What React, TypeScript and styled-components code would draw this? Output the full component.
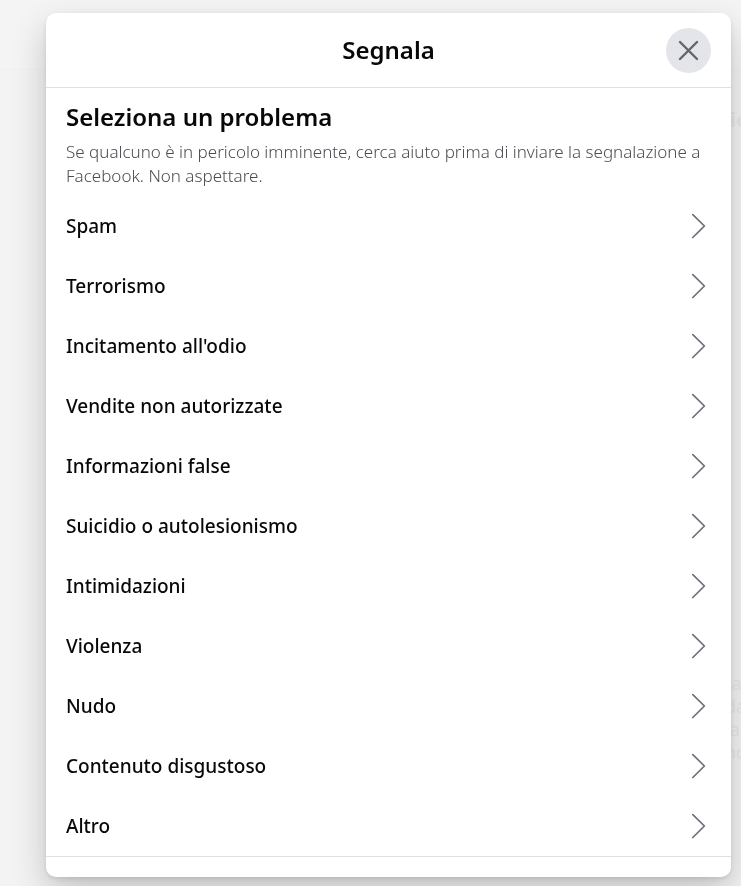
import React from "react";
import styled, { createGlobalStyle } from "styled-components";

const GlobalStyle = createGlobalStyle`
  *, *::before, *::after { box-sizing: border-box; }
  body {
    margin: 0;
    background: #f3f3f3;
    font-family: "Noto Sans", "Open Sans", sans-serif;
    color: #080809;
  }
`;

const Page = styled.div`
  min-height: 100vh;
  display: flex;
  flex-direction: column;
  overflow: hidden;
`;

const TopBar = styled.div`
  height: 70px;
  background: #f4f4f4;
  border-bottom: 1px solid #f1f1f1;
`;

const Feed = styled.div`
  flex: 1;
  display: flex;
  flex-direction: column;
  align-items: flex-end;
  color: #e8e8e8;
`;

const FeedTitle = styled.div`
  width: 11px;
  margin-top: 36px;
  font-size: 20px;
  font-weight: 700;
  line-height: 28px;
`;

const FeedText = styled.div`
  width: 16px;
  margin-top: 538px;
  font-size: 18px;
  line-height: 23px;
`;

const Overlay = styled.div`
  position: fixed;
  inset: 0;
  padding: 13px 10px 9px 46px;
`;

const Dialog = styled.section`
  height: 100%;
  display: flex;
  flex-direction: column;
  background: #fff;
  border-radius: 10px;
  box-shadow: 0 15px 35px rgba(0, 0, 0, 0.2), 0 2px 5px rgba(0, 0, 0, 0.1);
  overflow: hidden;
`;

const Header = styled.header`
  flex: none;
  height: 75px;
  padding: 0 20px;
  display: grid;
  grid-template-columns: 45px 1fr 45px;
  align-items: center;
  border-bottom: 1px solid #e0e0e1;
`;

const Title = styled.h1`
  grid-column: 2;
  margin: 0;
  text-align: center;
  font-size: 24px;
  line-height: 30px;
  font-weight: 600;
`;

const CloseButton = styled.button`
  width: 45px;
  height: 45px;
  padding: 0;
  border: 0;
  border-radius: 50%;
  background: #e4e5ea;
  color: #606670;
  display: flex;
  align-items: center;
  justify-content: center;
  cursor: pointer;
`;

const Body = styled.div`
  flex: 1;
  min-height: 0;
  padding: 14px 20px 0;
  overflow: hidden;
`;

const Heading = styled.h2`
  margin: 0;
  font-size: 24px;
  line-height: 30px;
  font-weight: 600;
`;

const Hint = styled.p`
  margin: 8px 0;
  font-size: 17px;
  font-weight: 300;
  line-height: 24px;
  color: #4a4d51;
`;

const List = styled.ul`
  margin: 0;
  padding: 0;
  list-style: none;
`;

const RowButton = styled.button`
  width: 100%;
  height: 60px;
  padding: 0;
  border: 0;
  background: none;
  display: flex;
  align-items: center;
  justify-content: space-between;
  font: inherit;
  font-size: 19px;
  font-weight: 500;
  line-height: 25px;
  color: inherit;
  text-align: left;
  cursor: pointer;
`;

const Footer = styled.footer`
  flex: none;
  height: 21px;
  border-top: 1px solid #e0e0e1;
`;

const PROBLEMS = [
  "Spam",
  "Terrorismo",
  "Incitamento all'odio",
  "Vendite non autorizzate",
  "Informazioni false",
  "Suicidio o autolesionismo",
  "Intimidazioni",
  "Violenza",
  "Nudo",
  "Contenuto disgustoso",
  "Altro",
];

const CloseIcon = () => (
  <svg width="21" height="21" viewBox="0 0 21 21" fill="none" stroke="currentColor" strokeWidth="2.4" strokeLinecap="round" aria-hidden="true">
    <path d="M2 2 19 19M19 2 2 19" />
  </svg>
);

const Chevron = () => (
  <svg width="25" height="30" viewBox="0 0 25 30" fill="none" stroke="#6a6f78" strokeWidth="1.7" strokeLinecap="round" strokeLinejoin="round" aria-hidden="true">
    <path d="M6.8 3.6 18.4 15 6.8 26.5" />
  </svg>
);

export default function App() {
  return (
    <>
      <GlobalStyle />
      <Page aria-hidden="true">
        <TopBar />
        <Feed>
          <FeedTitle>io</FeedTitle>
          <FeedText>
            ta
            <br />
            da
            <br />
            la
            <br />
            no
          </FeedText>
        </Feed>
      </Page>
      <Overlay>
        <Dialog role="dialog" aria-labelledby="report-title">
          <Header>
            <Title id="report-title">Segnala</Title>
            <CloseButton aria-label="Chiudi">
              <CloseIcon />
            </CloseButton>
          </Header>
          <Body>
            <Heading>Seleziona un problema</Heading>
            <Hint>
              Se qualcuno è in pericolo imminente, cerca aiuto prima di inviare la segnalazione a
              Facebook. Non aspettare.
            </Hint>
            <List>
              {PROBLEMS.map((label) => (
                <li key={label}>
                  <RowButton>
                    {label}
                    <Chevron />
                  </RowButton>
                </li>
              ))}
            </List>
          </Body>
          <Footer />
        </Dialog>
      </Overlay>
    </>
  );
}
